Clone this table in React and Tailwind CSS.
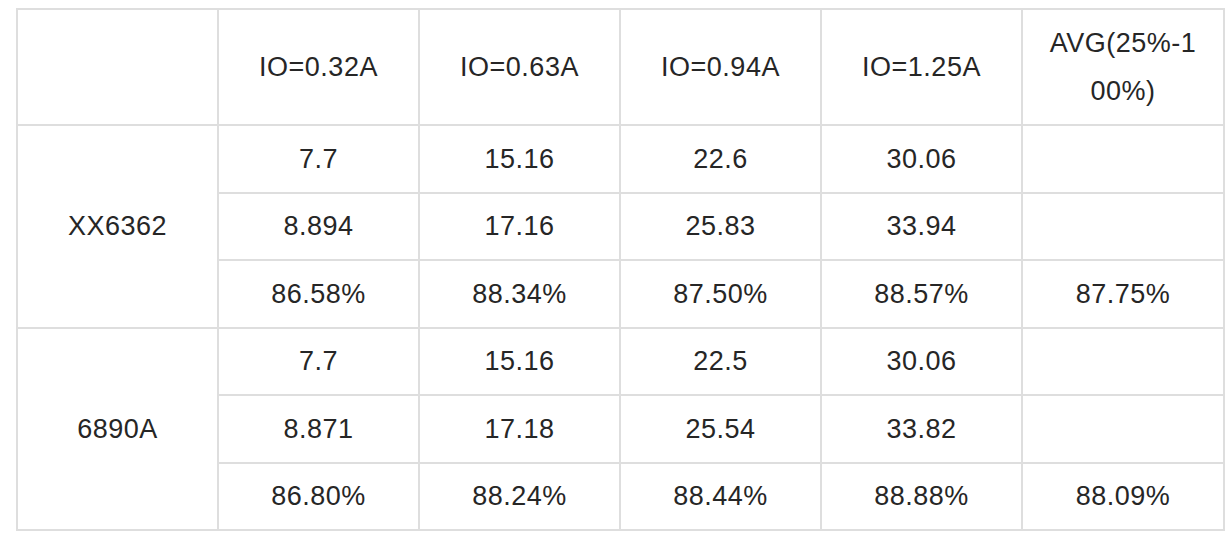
import React from "react";

const groups = [
  {
    name: "XX6362",
    rows: [
      ["7.7", "15.16", "22.6", "30.06", ""],
      ["8.894", "17.16", "25.83", "33.94", ""],
      ["86.58%", "88.34%", "87.50%", "88.57%", "87.75%"],
    ],
  },
  {
    name: "6890A",
    rows: [
      ["7.7", "15.16", "22.5", "30.06", ""],
      ["8.871", "17.18", "25.54", "33.82", ""],
      ["86.80%", "88.24%", "88.44%", "88.88%", "88.09%"],
    ],
  },
];

const heads = ["IO=0.32A", "IO=0.63A", "IO=0.94A", "IO=1.25A"];

const cell = "border-2 border-[#dedede] text-center align-middle p-0";

export default function App() {
  return (
    <div
      className="w-[1231px] h-[543px] bg-white pt-[8px] pl-[16px] text-[#262626] text-[27px] tracking-[0.5px]"
      style={{ fontFamily: '"Liberation Sans", Arial, sans-serif' }}
    >
      <table className="table-fixed border-collapse w-[1207px]">
        <colgroup>
          <col className="w-[201px]" />
          <col className="w-[201px]" />
          <col className="w-[201px]" />
          <col className="w-[201px]" />
          <col className="w-[201px]" />
          <col className="w-[202px]" />
        </colgroup>
        <tbody>
          <tr className="h-[116px]">
            <td className={cell}></td>
            {heads.map((h) => (
              <td key={h} className={cell}>
                {h}
              </td>
            ))}
            <td className={cell + " leading-[48px] px-[14px]"}>
              AVG(25%-1
              <br />
              00%)
            </td>
          </tr>
          {groups.map((g) =>
            g.rows.map((r, i) => (
              <tr key={g.name + i} className="h-[67.5px]">
                {i === 0 && (
                  <td rowSpan={3} className={cell}>
                    {g.name}
                  </td>
                )}
                {r.map((v, j) => (
                  <td key={j} className={cell}>
                    {v}
                  </td>
                ))}
              </tr>
            ))
          )}
        </tbody>
      </table>
    </div>
  );
}
